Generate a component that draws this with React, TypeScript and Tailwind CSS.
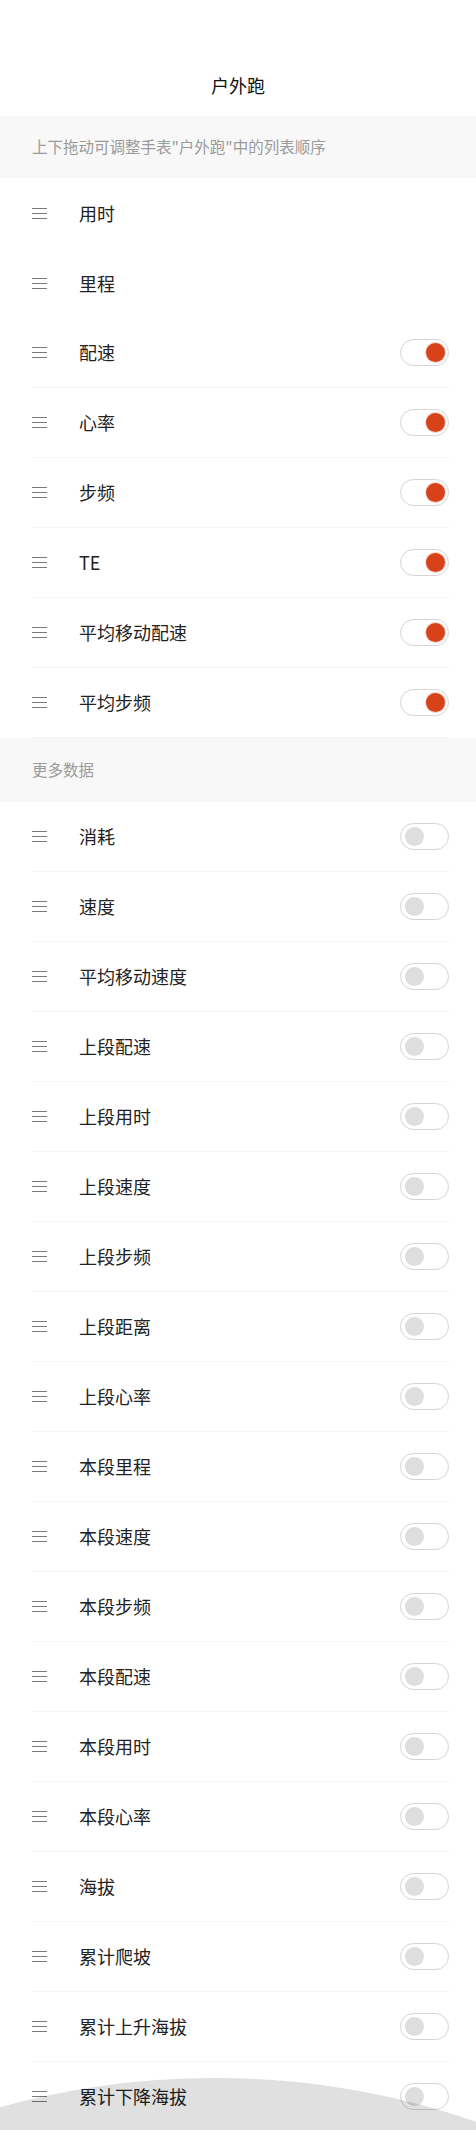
import React from "react";

type Item = { label: string; toggle?: boolean; on?: boolean };

const topItems: Item[] = [
  { label: "用时" },
  { label: "里程" },
  { label: "配速", toggle: true, on: true },
  { label: "心率", toggle: true, on: true },
  { label: "步频", toggle: true, on: true },
  { label: "TE", toggle: true, on: true },
  { label: "平均移动配速", toggle: true, on: true },
  { label: "平均步频", toggle: true, on: true },
];

const moreItems: Item[] = [
  "消耗",
  "速度",
  "平均移动速度",
  "上段配速",
  "上段用时",
  "上段速度",
  "上段步频",
  "上段距离",
  "上段心率",
  "本段里程",
  "本段速度",
  "本段步频",
  "本段配速",
  "本段用时",
  "本段心率",
  "海拔",
  "累计爬坡",
  "累计上升海拔",
  "累计下降海拔",
].map((label) => ({ label, toggle: true, on: false }));

function DragHandle() {
  return (
    <div className="flex w-[15px] flex-col gap-[4px]">
      <span className="block h-px w-full bg-[#7a7a7a]" />
      <span className="block h-px w-full bg-[#7a7a7a]" />
      <span className="block h-px w-full bg-[#7a7a7a]" />
    </div>
  );
}

function Toggle({ on }: { on: boolean }) {
  return (
    <div
      className={`flex h-[27px] w-[49px] items-center rounded-full border border-[#d4d4d4] bg-white px-[3px] ${
        on ? "justify-end" : "justify-start"
      }`}
    >
      {on ? (
        <span className="block h-[19px] w-[19px] rounded-full bg-[#d8421a] ring-1 ring-[#f6d2c6]" />
      ) : (
        <span className="ml-[1px] block h-[19px] w-[19px] rounded-full bg-[#dedede]" />
      )}
    </div>
  );
}

function Row({ item }: { item: Item }) {
  return (
    <div className="pl-8 pr-[27px]">
      <div
        className={`flex h-[70px] items-center ${
          item.toggle ? "border-b border-[#f5f5f5]" : ""
        }`}
      >
        <DragHandle />
        <span className="ml-[32px] flex-1 text-[18px] text-[#222]">{item.label}</span>
        {item.toggle && <Toggle on={!!item.on} />}
      </div>
    </div>
  );
}

function SectionHeader({ text, height }: { text: string; height: string }) {
  return (
    <div className={`flex items-center bg-[#f8f8f8] px-8 text-[15.5px] text-[#9a9a9a] ${height}`}>
      {text}
    </div>
  );
}

export default function App() {
  return (
    <div
      className="relative h-[2130px] w-[476px] overflow-hidden bg-white"
      style={{ fontFamily: '"Noto Sans CJK SC", "Noto Sans", sans-serif' }}
    >
      <div className="flex h-[116px] items-end justify-center pb-[17px] text-[18px] text-[#111]">
        户外跑
      </div>
      <SectionHeader text={'上下拖动可调整手表"户外跑"中的列表顺序'} height="h-[62px]" />
      {topItems.map((item) => (
        <Row key={item.label} item={item} />
      ))}
      <SectionHeader text="更多数据" height="h-[64px]" />
      {moreItems.map((item) => (
        <Row key={item.label} item={item} />
      ))}

      {/* watermark overlay at the bottom */}
      <div className="pointer-events-none absolute left-[-385px] top-[2078px] h-[880px] w-[1200px] rounded-[50%] bg-black/[0.12]" />
    </div>
  );
}
